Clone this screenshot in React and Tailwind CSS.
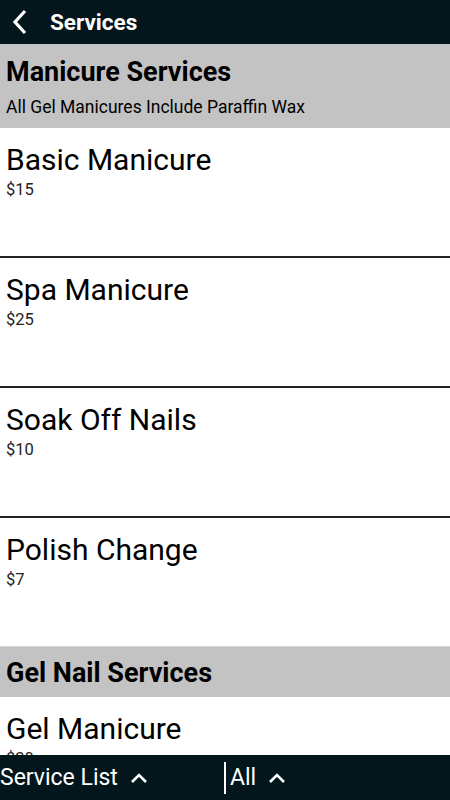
import React from "react";

const items1 = [
  { name: "Basic Manicure", price: "$15" },
  { name: "Spa Manicure", price: "$25" },
  { name: "Soak Off Nails", price: "$10" },
  { name: "Polish Change", price: "$7" },
];

function Caret() {
  return (
    <svg width="18" height="12" viewBox="0 0 18 12" className="ml-[12px]">
      <path d="M2 10 L9 3 L16 10" fill="none" stroke="white" strokeWidth="2.6" />
    </svg>
  );
}

function Item({ name, price, last }) {
  return (
    <div className={`shrink-0 bg-white px-[6px] ${last ? "h-[128px]" : "h-[130px] border-b-2 border-[#222]"}`}>
      <div className="pt-[14px] text-[30px] leading-[36px] text-black">{name}</div>
      <div className="pt-[2px] text-[16.5px] leading-[20px] text-[#222]">{price}</div>
    </div>
  );
}

export default function App() {
  return (
    <div className="relative h-[800px] w-[450px] overflow-hidden bg-white" style={{ fontFamily: "Roboto, 'Noto Sans', sans-serif" }}>
      <div className="flex h-[44px] items-center bg-[#03161b]">
        <svg width="20" height="28" viewBox="0 0 20 28" className="ml-[10px]">
          <path d="M15 3 L5 14 L15 25" fill="none" stroke="white" strokeWidth="3.2" />
        </svg>
        <div className="ml-[20px] text-[22.5px] font-bold leading-[44px] text-white">Services</div>
      </div>
      <div className="h-[84px] bg-[#c3c3c3] px-[6px]">
        <div className="pt-[12px] text-[27px] font-bold leading-[32px] text-black">Manicure Services</div>
        <div className="pt-[9px] text-[17.5px] leading-[20px] text-black">All Gel Manicures Include Paraffin Wax</div>
      </div>
      {items1.map((it, i) => (
        <Item key={i} {...it} last={i === items1.length - 1} />
      ))}
      <div className="h-[51px] border-t border-[#d8d8d8] bg-[#c3c3c3] px-[6px]">
        <div className="pt-[10px] text-[27px] font-bold leading-[32px] text-black">Gel Nail Services</div>
      </div>
      <Item name="Gel Manicure" price="$30" />
      <div className="absolute bottom-0 left-0 flex h-[45px] w-[450px] items-center bg-[#03161b] text-white">
        <div className="flex w-[224px] items-center">
          <span className="text-[23px] leading-none">Service List</span>
          <Caret />
        </div>
        <div className="h-[32px] w-[2px] bg-white" />
        <div className="ml-[4px] flex items-center">
          <span className="text-[23px] leading-none">All</span>
          <Caret />
        </div>
      </div>
    </div>
  );
}
